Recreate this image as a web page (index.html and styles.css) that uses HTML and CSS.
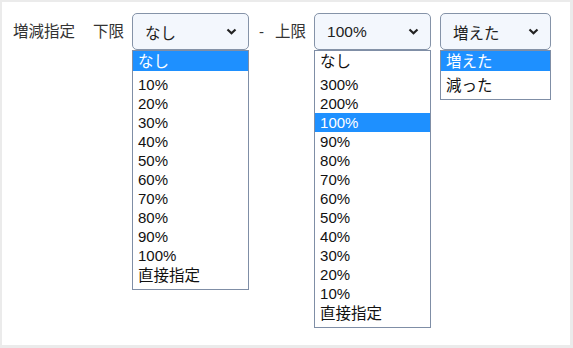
FILE: index.html
```html
<!DOCTYPE html>
<html lang="ja">
<head>
  <meta charset="UTF-8" />
  <title>増減指定</title>
  <link rel="stylesheet" href="styles.css">
</head>
<body>
  <div class="panel">
    <div class="fila">
      <span class="rotulo rotulo-titulo">増減指定</span>
      <span class="rotulo rotulo-limite">下限</span>

      <div class="seletor seletor-largo">
        <div class="caixa">
          <span>なし</span>
          <svg class="seta" width="11" height="7" viewBox="0 0 11 7"><path d="M1.5 1.5 L5.5 5.2 L9.5 1.5" fill="none" stroke="#222" stroke-width="2.2"/></svg>
        </div>
        <ul class="lista">
          <li class="cjk ativo">なし</li>
          <li>10%</li>
          <li>20%</li>
          <li>30%</li>
          <li>40%</li>
          <li>50%</li>
          <li>60%</li>
          <li>70%</li>
          <li>80%</li>
          <li>90%</li>
          <li>100%</li>
          <li class="cjk">直接指定</li>
        </ul>
      </div>

      <span class="rotulo rotulo-traco">-</span>
      <span class="rotulo rotulo-limite">上限</span>

      <div class="seletor seletor-largo">
        <div class="caixa">
          <span>100%</span>
          <svg class="seta" width="11" height="7" viewBox="0 0 11 7"><path d="M1.5 1.5 L5.5 5.2 L9.5 1.5" fill="none" stroke="#222" stroke-width="2.2"/></svg>
        </div>
        <ul class="lista">
          <li class="cjk">なし</li>
          <li>300%</li>
          <li>200%</li>
          <li class="ativo">100%</li>
          <li>90%</li>
          <li>80%</li>
          <li>70%</li>
          <li>60%</li>
          <li>50%</li>
          <li>40%</li>
          <li>30%</li>
          <li>20%</li>
          <li>10%</li>
          <li class="cjk">直接指定</li>
        </ul>
      </div>

      <div class="seletor seletor-curto">
        <div class="caixa">
          <span>増えた</span>
          <svg class="seta" width="11" height="7" viewBox="0 0 11 7"><path d="M1.5 1.5 L5.5 5.2 L9.5 1.5" fill="none" stroke="#222" stroke-width="2.2"/></svg>
        </div>
        <ul class="lista">
          <li class="cjk ativo">増えた</li>
          <li class="cjk">減った</li>
        </ul>
      </div>
    </div>
  </div>
</body>
</html>
```

FILE: styles.css
```css
body {
  margin: 0;
  background: #ebebeb;
  font-family: "Liberation Sans", "Noto Sans CJK JP", sans-serif;
  font-size: 15px;
  color: #222;
}
.panel {
  margin: 2px 3px 3px 2px;
  height: 343px;
  background: #fff;
  box-sizing: border-box;
  padding: 11px 0 0 11px;
}
.fila {
  display: flex;
  align-items: flex-start;
}
.rotulo {
  height: 37px;
  line-height: 37px;
  color: #333;
  font-size: 15.5px;
}
.rotulo-titulo {
  margin-right: 18px;
}
.rotulo-limite {
  margin-right: 8px;
}
.rotulo-traco {
  font-size: 15px;
  margin: 0 11px 0 10px;
}
.seletor {
  display: flex;
  flex-direction: column;
}
.seletor-largo {
  width: 117px;
}
.seletor-curto {
  width: 111px;
  margin-left: 9px;
}
.caixa {
  height: 37px;
  box-sizing: border-box;
  border: 1px solid #8593a8;
  border-radius: 5px;
  background: #f3f7fd;
  display: flex;
  align-items: center;
  justify-content: space-between;
  padding: 0 11px 0 12px;
}
.caixa span {
  font-size: 15.5px;
}
.lista {
  list-style: none;
  margin: 0;
  padding: 0;
  border: 1px solid #7f8ea6;
  background: #fff;
}
.lista li {
  height: 19px;
  line-height: 19px;
  padding-left: 5px;
  color: #111;
  font-size: 15px;
}
/* linhas com texto japonês ficam mais altas */
.lista li.cjk {
  height: 20px;
  line-height: 21px;
  margin-bottom: 4px;
  font-size: 15.5px;
}
.lista li.ativo {
  background: #1e90ff;
  color: #fff;
}
```
